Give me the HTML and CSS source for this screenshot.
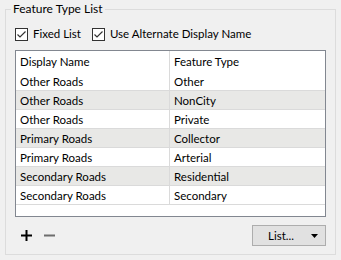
FILE: index.html
```html
<!DOCTYPE html>
<html>
<head>
    <meta charset="UTF-8">
    <title>Feature Type List</title>
    <link rel="stylesheet" href="styles.css">
</head>
<body>
    <fieldset class="group">
        <legend>Feature Type List</legend>

        <div class="options">
            <label class="check">
                <span class="box"><svg width="11" height="11" viewBox="0 0 11 11"><polyline points="1.5,5.5 4,8 9.5,2.5" fill="none" stroke="#333" stroke-width="1.2"/></svg></span>
                Fixed List
            </label>
            <label class="check">
                <span class="box"><svg width="11" height="11" viewBox="0 0 11 11"><polyline points="1.5,5.5 4,8 9.5,2.5" fill="none" stroke="#333" stroke-width="1.2"/></svg></span>
                Use Alternate Display Name
            </label>
        </div>

        <div class="list">
            <table class="grid">
                <thead>
                    <tr><th>Display Name</th><th>Feature Type</th></tr>
                </thead>
                <tbody>
                    <tr><td>Other Roads</td><td>Other</td></tr>
                    <tr class="alt"><td>Other Roads</td><td>NonCity</td></tr>
                    <tr><td>Other Roads</td><td>Private</td></tr>
                    <tr class="alt"><td>Primary Roads</td><td>Collector</td></tr>
                    <tr><td>Primary Roads</td><td>Arterial</td></tr>
                    <tr class="alt"><td>Secondary Roads</td><td>Residential</td></tr>
                    <tr><td>Secondary Roads</td><td>Secondary</td></tr>
                </tbody>
            </table>
        </div>

        <div class="footer">
            <div class="tools">
                <svg class="tool" width="11" height="11" viewBox="0 0 11 11"><rect x="0" y="4.5" width="11" height="2" fill="#000"/><rect x="4.5" y="0" width="2" height="11" fill="#000"/></svg>
                <svg class="tool" width="11" height="11" viewBox="0 0 11 11"><rect x="0" y="4.5" width="11" height="2" fill="#6d6d6d"/></svg>
            </div>
            <button class="list-btn">
                <span>List...</span>
                <svg width="7" height="4" viewBox="0 0 7 4"><polygon points="0,0 7,0 3.5,4" fill="#000"/></svg>
            </button>
        </div>
    </fieldset>
</body>
</html>
```

FILE: styles.css
```css
body {
    margin: 0;
    padding: 1px 5px 0;
    background: #f0f0f0;
    font-family: Lato, sans-serif;
    font-size: 11.5px;
    color: #000;
}

.group {
    margin: 0;
    height: 254px;
    box-sizing: border-box;
    border: 1px solid #dcdcdc;
    padding: 0 9px 8px;
    display: flex;
    flex-direction: column;
}

.group legend {
    padding: 0 2px;
    margin-left: -4px;
    line-height: 16px;
    font-size: 12px;
}

.options {
    display: flex;
    gap: 11px;
    margin-top: 9px;
}

.check {
    display: flex;
    align-items: center;
    gap: 5px;
    line-height: 16px;
}

.box {
    width: 11px;
    height: 11px;
    border: 1px solid #333;
    background: #fff;
    display: flex;
}

.list {
    margin-top: 8px;
    height: 170px;
    box-sizing: border-box;
    border: 1px solid #828790;
    background: #fff;
}

.grid {
    border-collapse: collapse;
    width: 100%;
}

.grid th,
.grid td {
    text-align: left;
    font-weight: normal;
    padding: 0 0 0 4px;
    white-space: nowrap;
}

.grid th:first-child,
.grid td:first-child {
    width: 149px;
    border-right: 1px solid #dadada;
}

.grid th {
    height: 21px;
}

.grid td {
    height: 18px;
    border-bottom: 1px solid #dadada;
}

.grid tr.alt td {
    background: #e8e8e6;
}

.footer {
    display: flex;
    justify-content: space-between;
    align-items: center;
    margin-top: 8px;
}

.tools {
    display: flex;
    gap: 12px;
    padding-left: 6px;
}

.tool {
    display: block;
}

.list-btn {
    width: 74px;
    height: 21px;
    border: 1px solid #adadad;
    background: #e1e1e1;
    font-family: inherit;
    font-size: 11.5px;
    color: #000;
    padding: 0 7px 0 15px;
    display: flex;
    align-items: center;
    justify-content: space-between;
}
```
